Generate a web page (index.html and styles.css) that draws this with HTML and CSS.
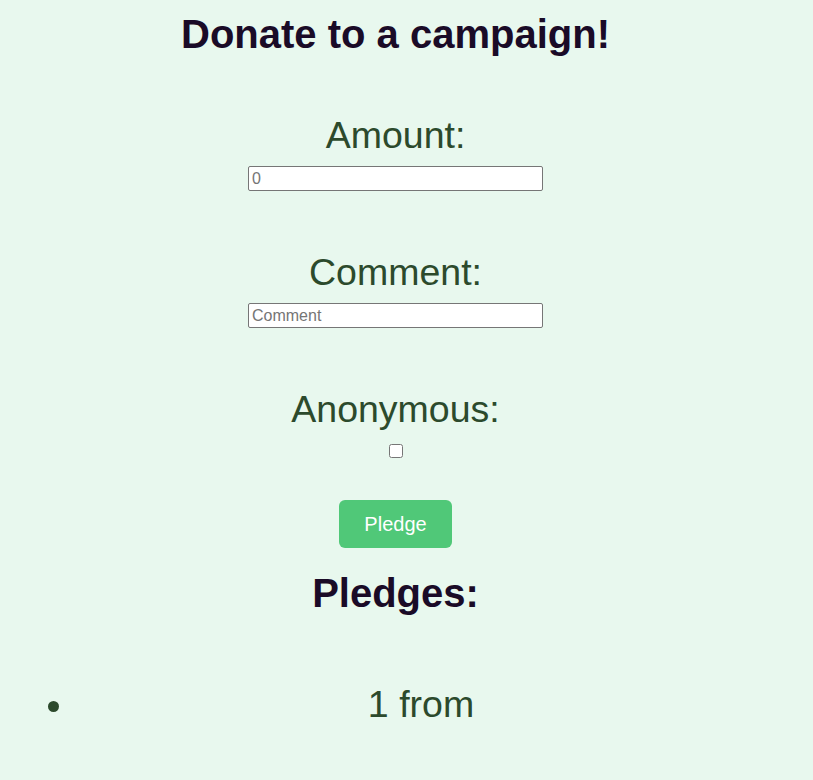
FILE: index.html
```html
<!DOCTYPE html>
<html>
<head>
<meta charset="utf-8">
<link rel="stylesheet" href="styles.css">
</head>
<body>
<main class="page">
  <h1 class="title">Donate to a campaign!</h1>
  <form class="form">
    <div class="field">
      <label class="label" for="amount">Amount:</label>
      <input class="text-input" id="amount" type="number" placeholder="0">
    </div>
    <div class="field">
      <label class="label" for="comment">Comment:</label>
      <input class="text-input" id="comment" type="text" placeholder="Comment">
    </div>
    <div class="field">
      <label class="label" for="anon">Anonymous:</label>
      <input class="check" id="anon" type="checkbox">
    </div>
    <button class="pledge-btn" type="button">Pledge</button>
  </form>
  <h1 class="subtitle">Pledges:</h1>
  <ul class="pledges">
    <li class="pledge">1 from</li>
  </ul>
</main>
</body>
</html>
```
FILE: styles.css
```css
html, body {
  margin: 0;
  padding: 0;
  background: #e8f8ee;
}
body {
  font-family: "Liberation Sans", Arial, sans-serif;
}
.page {
  width: 791px;
  display: flex;
  flex-direction: column;
  align-items: center;
}
.title {
  margin: 11px 0 0;
  font-size: 40px;
  line-height: 46px;
  font-weight: bold;
  color: #1a0b27;
}
.form {
  display: flex;
  flex-direction: column;
  align-items: center;
  margin-top: 57px;
}
.field {
  display: flex;
  flex-direction: column;
  align-items: center;
  margin-bottom: 60px;
}
.field:nth-child(3) {
  margin-bottom: 0;
}
.label {
  font-size: 37.5px;
  line-height: 43px;
  color: #2c4a2c;
}
.text-input {
  box-sizing: border-box;
  margin-top: 9px;
  width: 295px;
  height: 25px;
  border: 1px solid #767676;
  border-radius: 2px;
  padding: 1px 3px;
  font-family: "Liberation Sans", Arial, sans-serif;
  font-size: 16px;
  background: #fff;
}
.text-input::placeholder {
  color: #757575;
}
.text-input::-webkit-outer-spin-button,
.text-input::-webkit-inner-spin-button {
  -webkit-appearance: none;
  margin: 0;
}
.check {
  margin: 13px 0 0 2px;
  width: 14px;
  height: 14px;
}
.pledge-btn {
  margin-top: 42px;
  width: 113px;
  height: 48px;
  border: none;
  border-radius: 6px;
  background: #50c878;
  color: #fff;
  font-family: "Liberation Sans", Arial, sans-serif;
  font-size: 20px;
}
.subtitle {
  margin: 22px 0 0;
  font-size: 40px;
  line-height: 46px;
  font-weight: bold;
  color: #1a0b27;
}
.pledges {
  align-self: stretch;
  margin: 67px 26px 0 0;
  padding-left: 77px;
  color: #2c4a2c;
}
.pledge {
  font-size: 37.5px;
  line-height: 43px;
  text-align: center;
}
```
